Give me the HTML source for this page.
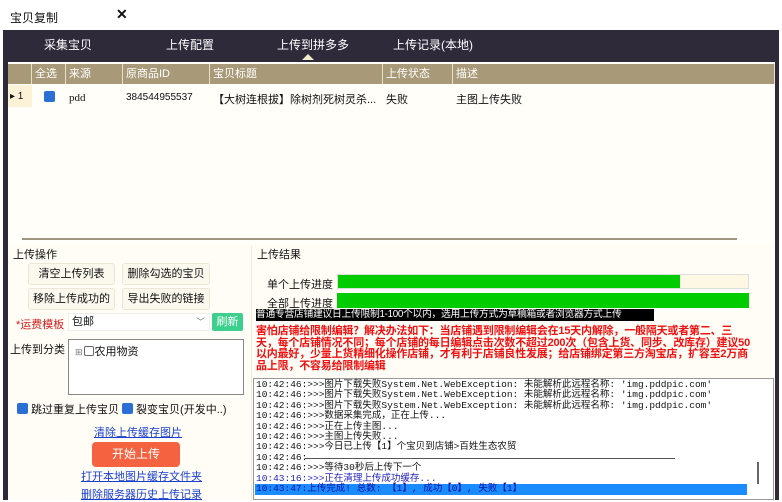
<!DOCTYPE html>
<html><head><meta charset="utf-8"><style>
*{margin:0;padding:0;box-sizing:border-box}
body{width:782px;height:500px;overflow:hidden;background:#fff;font-family:"Liberation Sans","Noto Sans CJK SC",sans-serif;font-size:11px;color:#111;position:relative}
.a{position:absolute;white-space:nowrap}
.frame{left:3px;top:30px;width:776px;height:470px;background:#2e2a3a}
.nav{color:#fff;font-size:12px;top:36px}
.hd{top:64px;height:20px;background:#a89a78;color:#fff;line-height:20px;padding-left:3px;border-right:1px solid #e8e0c8}
.btn{background:#fbf8ee;border:1px solid #ece6d6;border-radius:3px;text-align:center;line-height:20px;height:22px}
.lnk{color:#1a3fd0;text-decoration:underline;font-size:11px}
.cb{width:11px;height:11px;background:#2a6fd6;border-radius:2px;display:inline-block}
.log{font-family:"Liberation Mono","Noto Sans CJK SC",monospace;font-size:9.5px;line-height:10.4px;left:256px}
</style></head><body>
<div class="a" style="left:10px;top:9px;font-size:12px">宝贝复制</div>
<div class="a" style="left:116px;top:6px;font-size:14px;font-weight:bold">✕</div>
<div class="a frame"></div>
<div class="a nav" style="left:44px">采集宝贝</div>
<div class="a nav" style="left:166px">上传配置</div>
<div class="a nav" style="left:277px">上传到拼多多</div>
<div class="a nav" style="left:393px">上传记录(本地)</div>
<div class="a" style="left:302px;top:54px;width:0;height:0;border-left:6px solid transparent;border-right:6px solid transparent;border-bottom:6px solid #f3ecc8"></div>
<div class="a" style="left:8px;top:62px;width:767px;height:438px;background:#fffef9"></div>
<div class="a hd" style="left:8px;width:24px"></div>
<div class="a hd" style="left:32px;width:34px">全选</div>
<div class="a hd" style="left:66px;width:57px">来源</div>
<div class="a hd" style="left:123px;width:87px">原商品ID</div>
<div class="a hd" style="left:210px;width:173px">宝贝标题</div>
<div class="a hd" style="left:383px;width:70px">上传状态</div>
<div class="a hd" style="left:453px;width:322px">描述</div>
<div class="a" style="left:8px;top:85px;width:24px;height:22px;background:#fbf2d8"></div>
<div class="a" style="left:10px;top:91px;font-size:10px">▸ 1</div>
<div class="a cb" style="left:44px;top:91px"></div>
<div class="a" style="left:69px;top:92px;font-size:11px;font-family:'Liberation Serif',serif">pdd</div>
<div class="a" style="left:126px;top:92px;font-size:10px">384544955537</div>
<div class="a" style="left:213px;top:91px;width:166px;overflow:hidden">【大树连根拔】除树剂死树灵杀...</div>
<div class="a" style="left:386px;top:91px">失败</div>
<div class="a" style="left:456px;top:91px">主图上传失败</div>
<div class="a" style="left:22px;top:238px;width:715px;height:2px;background:#a09681"></div>
<div class="a" style="left:8px;top:244px;width:767px;height:256px;background:#fffdf6"></div>
<div class="a" style="left:13px;top:246px">上传操作</div>
<div class="a btn" style="left:28px;top:263px;width:87px">清空上传列表</div>
<div class="a btn" style="left:122px;top:263px;width:88px">删除勾选的宝贝</div>
<div class="a btn" style="left:28px;top:288px;width:87px">移除上传成功的</div>
<div class="a btn" style="left:122px;top:288px;width:88px">导出失败的链接</div>
<div class="a" style="left:16px;top:316px;color:#d02020">*运费模板</div>
<div class="a" style="left:68px;top:313px;width:142px;height:18px;background:#fff;border:1px solid #eee;padding-left:3px;line-height:16px">包邮<span style="position:absolute;right:4px;color:#777;font-size:9px">﹀</span></div>
<div class="a" style="left:212px;top:313px;width:31px;height:18px;background:#3ccf8e;color:#fff;text-align:center;line-height:18px;border-radius:2px">刷新</div>
<div class="a" style="left:10px;top:341px">上传到分类</div>
<div class="a" style="left:68px;top:339px;width:176px;height:56px;background:#fff;border:1px solid #888"></div>
<div class="a" style="left:75px;top:343px;font-size:11px"><span style="font-size:9px;color:#777">⊞</span><span style="display:inline-block;width:10px;height:10px;border:1px solid #666;border-radius:2px;vertical-align:-1px;margin:0 1px"></span>农用物资</div>
<div class="a" style="left:17px;top:401px"><span class="cb" style="vertical-align:-1px"></span> 跳过重复上传宝贝</div>
<div class="a" style="left:122px;top:401px"><span class="cb" style="vertical-align:-1px"></span> 裂变宝贝(开发中..)</div>
<div class="a lnk" style="left:94px;top:424px">清除上传缓存图片</div>
<div class="a" style="left:92px;top:442px;width:88px;height:25px;background:#f5623f;color:#fff;text-align:center;line-height:25px;border-radius:4px;font-size:12px">开始上传</div>
<div class="a lnk" style="left:81px;top:468px">打开本地图片缓存文件夹</div>
<div class="a lnk" style="left:81px;top:486px">删除服务器历史上传记录</div>
<div class="a" style="left:251px;top:246px;width:1px;height:254px;background:#f0ead8"></div>
<div class="a" style="left:257px;top:246px">上传结果</div>
<div class="a" style="left:267px;top:276px">单个上传进度</div>
<div class="a" style="left:337px;top:274px;width:412px;height:15px;background:#fdf8e4;border:1px solid #ddd"><div style="width:342px;height:13px;background:#00cc00"></div></div>
<div class="a" style="left:267px;top:295px">全部上传进度</div>
<div class="a" style="left:337px;top:293px;width:412px;height:15px;background:#00cc00"></div>
<div class="a" style="left:256px;top:309px;height:12px;width:398px;overflow:hidden;background:#000;color:#fff;font-size:9.8px;line-height:12px;letter-spacing:-0.3px">普通专营店铺建议日上传限制1-100个以内，选用上传方式为草稿箱或者浏览器方式上传</div>
<div class="a" style="left:256px;top:326px;width:494px;white-space:normal;color:#f01010;font-weight:bold;font-size:11px;line-height:11.5px;letter-spacing:-0.2px">害怕店铺给限制编辑？解决办法如下：当店铺遇到限制编辑会在15天内解除，一般隔天或者第二、三天，每个店铺情况不同；每个店铺的每日编辑点击次数不超过200次（包含上货、同步、改库存）建议50以内最好，少量上货精细化操作店铺，才有利于店铺良性发展；给店铺绑定第三方淘宝店，扩容至2万商品上限，不容易给限制编辑</div>
<div class="a" style="left:253px;top:378px;width:521px;height:122px;background:#fff;border:1px solid #999"></div>
<div class="a log" style="top:380px">10:42:46:>>>图片下载失败System.Net.WebException: 未能解析此远程名称: 'img.pddpic.com'</div>
<div class="a log" style="top:390.4px">10:42:46:>>>图片下载失败System.Net.WebException: 未能解析此远程名称: 'img.pddpic.com'</div>
<div class="a log" style="top:400.8px">10:42:46:>>>图片下载失败System.Net.WebException: 未能解析此远程名称: 'img.pddpic.com'</div>
<div class="a log" style="top:411.2px">10:42:46:>>>数据采集完成，正在上传...</div>
<div class="a log" style="top:421.6px">10:42:46:>>>正在上传主图...</div>
<div class="a log" style="top:432px">10:42:46:>>>主图上传失败...</div>
<div class="a log" style="top:442.4px">10:42:46:>>>今日已上传【1】个宝贝到店铺>百姓生态农贸</div>
<div class="a log" style="top:452.8px">10:42:46:</div>
<div class="a" style="left:305px;top:458px;width:370px;height:1px;background:#555"></div>
<div class="a log" style="top:463.2px">10:42:46:>>>等待30秒后上传下一个</div>
<div class="a log" style="top:473.6px;color:#2020c0">10:43:16:>>>正在清理上传成功缓存...</div>
<div class="a log" style="top:484px;width:492px;height:11px;background:#1a8cff;color:#1010a0;left:255px;padding-left:1px">10:43:47:上传完成! 总数: 【1】, 成功【0】, 失败【1】</div>
<div class="a" style="left:757px;top:462px;width:2px;height:22px;background:#666"></div>
</body></html>
